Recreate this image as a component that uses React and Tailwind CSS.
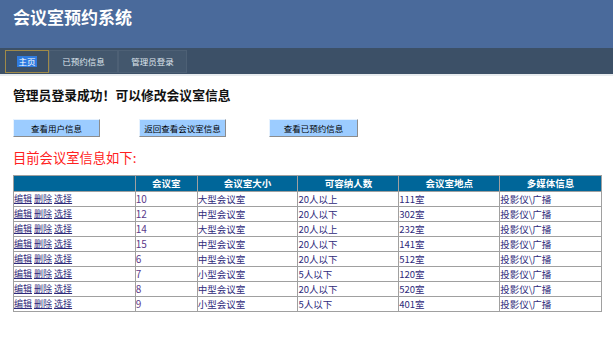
import React from 'react';

const rows = [
  ['10', '大型会议室', '20人以上', '111室'],
  ['12', '中型会议室', '20人以下', '302室'],
  ['14', '大型会议室', '20人以上', '232室'],
  ['15', '中型会议室', '20人以下', '141室'],
  ['6', '中型会议室', '20人以下', '512室'],
  ['7', '小型会议室', '5人以下', '120室'],
  ['8', '中型会议室', '20人以下', '520室'],
  ['9', '小型会议室', '5人以下', '401室'],
];

const font = { fontFamily: '"Noto Sans CJK SC", "Liberation Sans", sans-serif' };

function NavTab({ label, active }) {
  return (
    <div
      className={
        active
          ? 'flex h-[23px] w-[44px] items-center justify-center border border-[#a08a48] text-[8.5px] text-white'
          : 'flex h-[23px] w-[69px] items-center justify-center border border-[#4d6075] bg-[#43576d] text-[8.5px] text-[#dfe6ee]'
      }
    >
      {active ? <span className="bg-[#2f7be0] px-[1px] leading-[11px]">{label}</span> : label}
    </div>
  );
}

function ActionButton({ label, className }) {
  return (
    <button
      type="button"
      className={`h-[18px] whitespace-nowrap border border-t-[#e6f2ff] border-l-[#e6f2ff] border-b-[#8c8c8c] border-r-[#8c8c8c] bg-[#9cccff] p-0 text-[8.5px] leading-none text-black ${className}`}
    >
      {label}
    </button>
  );
}

export default function App() {
  return (
    <div className="h-[340px] w-[613px] overflow-hidden bg-white" style={font}>
      <div className="flex h-[48px] items-start bg-[#4a6a9b] pl-[13px] pt-[6px]">
        <h1 className="text-[17px] font-bold leading-[22px] text-white">会议室预约系统</h1>
      </div>
      <div className="flex h-[26px] items-start bg-[#3c5067] pl-[5px] pt-[2px]">
        <NavTab label="主页" active />
        <NavTab label="已预约信息" />
        <NavTab label="管理员登录" />
      </div>
      <div className="h-[2px] bg-[#e8ecef]" />

      <div className="px-[13px]">
        <p className="mt-[11px] text-[12.8px] font-bold leading-[16px] text-[#111]">
          管理员登录成功！可以修改会议室信息
        </p>
        <div className="mt-[16px] flex">
          <ActionButton label="查看用户信息" className="w-[87px]" />
          <ActionButton label="返回查看会议室信息" className="ml-[39px] w-[87px]" />
          <ActionButton label="查看已预约信息" className="ml-[43px] w-[89px]" />
        </div>
        <p className="mt-[12px] text-[13.3px] leading-[18px] text-[#ff2020]">目前会议室信息如下:</p>

        <table className="mt-[8px] w-[589px] border-collapse border border-[#a0a0a0] text-[9.5px]">
          <colgroup>
            <col className="w-[122px]" />
            <col className="w-[62px]" />
            <col className="w-[101px]" />
            <col className="w-[101px]" />
            <col className="w-[101px]" />
            <col className="w-[102px]" />
          </colgroup>
          <thead>
            <tr className="h-[16px] bg-[#006699] font-bold text-white">
              <th className="border border-[#a0a0a0] p-0 leading-[15px]"></th>
              <th className="border border-[#a0a0a0] p-0 leading-[15px]">会议室</th>
              <th className="border border-[#a0a0a0] p-0 leading-[15px]">会议室大小</th>
              <th className="border border-[#a0a0a0] p-0 leading-[15px]">可容纳人数</th>
              <th className="border border-[#a0a0a0] p-0 leading-[15px]">会议室地点</th>
              <th className="border border-[#a0a0a0] p-0 leading-[15px]">多媒体信息</th>
            </tr>
          </thead>
          <tbody>
            {rows.map((r) => (
              <tr key={r[0]} className="h-[15px] text-[#2e2a7a]">
                <td className="border border-[#a0a0a0] p-0 text-[9px] leading-[14px]">
                  <span className="underline">编辑</span> <span className="underline">删除</span>{' '}
                  <span className="underline">选择</span>
                </td>
                <td className="border border-[#a0a0a0] p-0 text-[10px] leading-[14px] text-[#5a3a8a]">{r[0]}</td>
                <td className="border border-[#a0a0a0] p-0 leading-[14px]">{r[1]}</td>
                <td className="border border-[#a0a0a0] p-0 leading-[14px]">{r[2]}</td>
                <td className="border border-[#a0a0a0] p-0 leading-[14px]">{r[3]}</td>
                <td className="border border-[#a0a0a0] p-0 leading-[14px]">投影仪\广播</td>
              </tr>
            ))}
          </tbody>
        </table>
      </div>
    </div>
  );
}
